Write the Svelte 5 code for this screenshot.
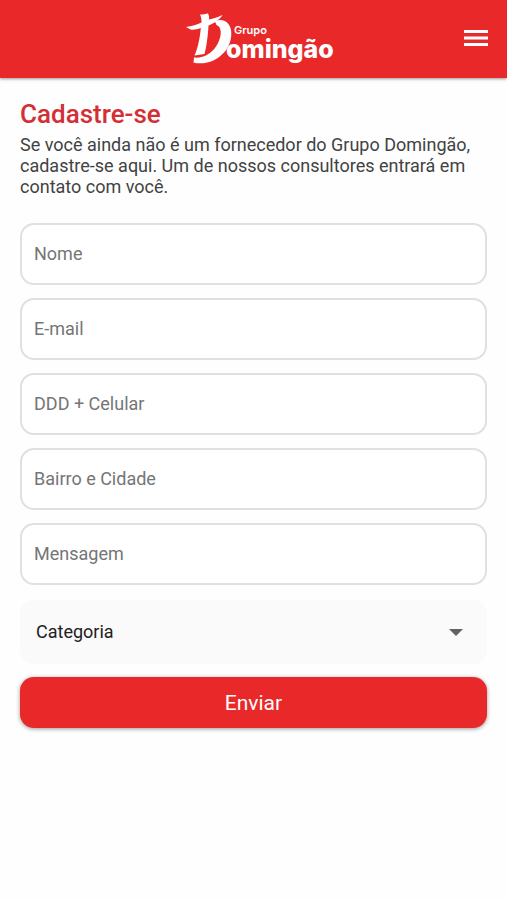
<script lang="ts">
	const fields = [
		{ id: 'nome', label: 'Nome', type: 'text' },
		{ id: 'email', label: 'E-mail', type: 'email' },
		{ id: 'celular', label: 'DDD + Celular', type: 'tel' },
		{ id: 'cidade', label: 'Bairro e Cidade', type: 'text' },
		{ id: 'mensagem', label: 'Mensagem', type: 'text' }
	];

	let values = $state<Record<string, string>>({
		nome: '',
		email: '',
		celular: '',
		cidade: '',
		mensagem: ''
	});
	let categoria = $state('');

	function handleSubmit(e: SubmitEvent) {
		e.preventDefault();
	}
</script>

<header class="topbar">
	<a class="logo" href="/" aria-label="Grupo Domingão">
		<svg width="152" height="56" viewBox="0 0 152 56" fill="#fff" aria-hidden="true">
			<path
				d="M0 17 C6 16.500 11 14.500 15.500 12.500 C15.700 9 15 6.500 14 4.500 C17 4.500 20 4 22 3.500 C23 5.500 23.300 7 23 9.500 C27 8.500 32 7 36.500 5 C34 9 29 13 22.500 15.500 C22 25 20.500 37 18.500 44 L8.500 45.500 C12 38 14 27 14.800 18 C11 19.500 7 20 4.500 19.500 Z"
			/>
			<path
				d="M29 11.500 C36 8 43 11 45 20 C47 34 38 46.500 25 51.500 C19 53.500 12 54 7.500 52.500 L8 47.500 C17 48.500 25 44 30 36.500 C35.500 28.500 37 17.500 30.500 15 Z"
			/>
			<text class="logo-small" x="48" y="24">Grupo</text>
			<text class="logo-big" x="40" y="48">omingão</text>
		</svg>
	</a>
	<button class="menu" type="button" aria-label="Abrir menu">
		<svg width="24" height="18" viewBox="0 0 24 18" aria-hidden="true">
			<path d="M0 2.500h24M0 9h24M0 15.500h24" stroke="#fff" stroke-width="3" />
		</svg>
	</button>
</header>

<main>
	<h1>Cadastre-se</h1>
	<p>
		Se você ainda não é um fornecedor do Grupo Domingão, cadastre-se aqui. Um de nossos consultores
		entrará em contato com você.
	</p>

	<form onsubmit={handleSubmit}>
		{#each fields as field}
			<input
				id={field.id}
				type={field.type}
				placeholder={field.label}
				aria-label={field.label}
				bind:value={values[field.id]}
			/>
		{/each}

		<div class="select-wrap">
			<select id="categoria" aria-label="Categoria" bind:value={categoria}>
				<option value="">Categoria</option>
			</select>
			<svg class="arrow" width="14" height="7" viewBox="0 0 14 7" aria-hidden="true">
				<path d="M0 0h14l-7 7z" fill="#616161" />
			</svg>
		</div>

		<button class="submit" type="submit">Enviar</button>
	</form>
</main>

<style>
	:global(body) {
		background: #fefefe;
		font-family: Roboto, 'Liberation Sans', sans-serif;
	}

	.topbar {
		display: grid;
		grid-template-columns: 1fr auto 1fr;
		align-items: center;
		height: 78px;
		padding: 0 16px 2px 32px;
		box-sizing: border-box;
		background: #e92929;
		box-shadow: 0 1px 3px rgba(0, 0, 0, 0.4);
	}

	.logo {
		grid-column: 2;
		display: flex;
	}

	.logo-small,
	.logo-big {
		font-family: Inter, sans-serif;
	}

	.logo-small {
		font-size: 11px;
		font-weight: 600;
	}

	.logo-big {
		font-size: 25px;
		font-weight: 800;
	}

	.menu {
		justify-self: end;
		display: flex;
		padding: 3px;
		border: none;
		background: none;
		cursor: pointer;
	}

	main {
		padding: 20px;
	}

	h1 {
		margin: 0;
		color: #d32f35;
		font-size: 26px;
		font-weight: 500;
		line-height: 32px;
	}

	p {
		margin: 4px 0 26px;
		color: #424242;
		font-size: 18px;
		line-height: 21px;
	}

	form {
		display: flex;
		flex-direction: column;
		gap: 13px;
	}

	input {
		width: 100%;
		height: 62px;
		padding: 0 12px 2px;
		box-sizing: border-box;
		border: 2px solid #e0e0e0;
		border-radius: 14px;
		background: #fff;
		color: #212121;
		font: 400 18px Roboto, sans-serif;
	}

	input::placeholder {
		color: #757575;
		opacity: 1;
	}

	.select-wrap {
		display: grid;
		align-items: center;
		margin-top: 2px;
	}

	select {
		grid-area: 1 / 1;
		width: 100%;
		height: 64px;
		padding: 0 48px 2px 16px;
		border: none;
		border-radius: 14px;
		appearance: none;
		background: #fafafa;
		color: #212121;
		font: 400 18px Roboto, sans-serif;
	}

	.arrow {
		grid-area: 1 / 1;
		justify-self: end;
		margin-right: 24px;
		pointer-events: none;
	}

	.submit {
		height: 51px;
		border: none;
		border-radius: 14px;
		background: #e92929;
		box-shadow: 0 1px 4px rgba(0, 0, 0, 0.4);
		color: #fff;
		font: 400 21px Roboto, sans-serif;
		cursor: pointer;
	}
</style>
